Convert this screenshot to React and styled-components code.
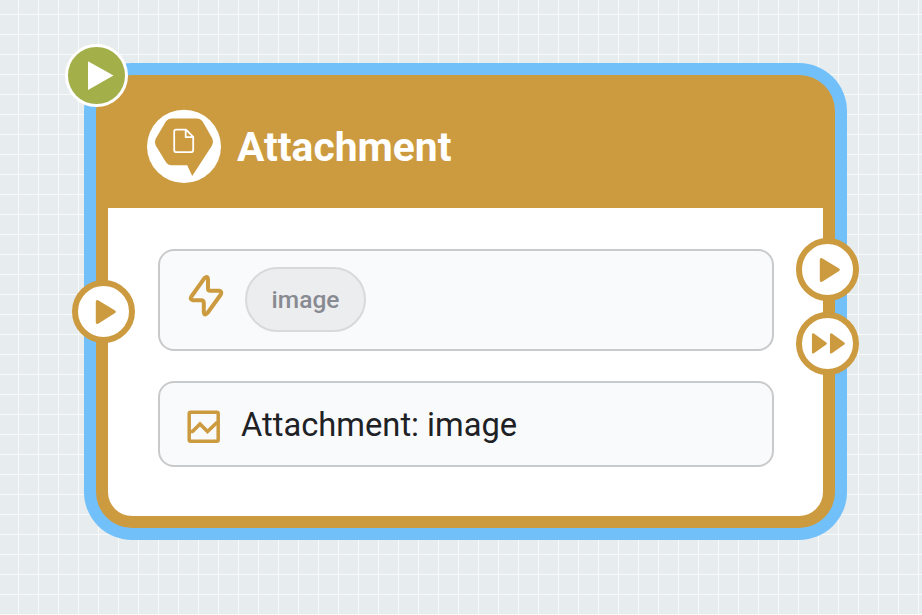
import React from "react";
import styled, { createGlobalStyle } from "styled-components";

const accent = "#cc9a3f";

const GlobalStyle = createGlobalStyle`
  * { box-sizing: border-box; }
  body { margin: 0; font-family: Roboto, sans-serif; overflow: hidden; }
`;

const Canvas = styled.main`
  position: relative;
  width: 922px;
  height: 615px;
  overflow: hidden;
  background-color: #e7ecef;
  background-image: linear-gradient(#f8fafa 1px, transparent 1px),
    linear-gradient(90deg, #f8fafa 1px, transparent 1px);
  background-size: 20px 20px;
  background-position: 18px 14px;
`;

const Node = styled.article`
  position: absolute;
  left: 84px;
  top: 63px;
  width: 763px;
  height: 477px;
  padding: 12px;
  border-radius: 48px;
  background: #72c0fa;
`;

const Card = styled.div`
  display: flex;
  flex-direction: column;
  height: 100%;
  padding: 0 12px 12px;
  border-radius: 36px;
  background: ${accent};
`;

const Header = styled.header`
  display: flex;
  align-items: center;
  gap: 16px;
  height: 133px;
  padding: 10px 0 0 39px;
`;

const Title = styled.h1`
  margin: 0;
  font-size: 40.75px;
  line-height: 48px;
  font-weight: 700;
  color: #fff;
`;

const Body = styled.div`
  flex: 1;
  display: flex;
  flex-direction: column;
  gap: 30px;
  padding: 41px 49px 0 50px;
  border-radius: 0 0 24px 24px;
  background: #fff;
`;

const Row = styled.section`
  display: flex;
  align-items: center;
  height: ${(p) => p.$height}px;
  padding-left: ${(p) => p.$inset}px;
  border: 2px solid #c9cacb;
  border-radius: 16px;
  background: #f9fafc;
`;

const Tag = styled.span`
  display: flex;
  align-items: center;
  justify-content: center;
  width: 121px;
  height: 65px;
  margin: 0 0 2px 17px;
  padding-top: 1px;
  border: 2px solid #d8d9db;
  border-radius: 33px;
  background: #ecedef;
  color: #888a91;
  font-size: 24.5px;
  font-weight: 500;
`;

const RowText = styled.span`
  margin: 2px 0 0 19px;
  font-size: 32.7px;
  line-height: 40px;
  color: #202124;
`;

const Glyph = styled.svg`
  display: block;
  flex: none;
  overflow: visible;
  transform: translateY(${(p) => p.$shift || 0}px);
`;

const Port = styled.button`
  position: absolute;
  left: ${(p) => p.$x}px;
  top: ${(p) => p.$y}px;
  width: 63px;
  height: 63px;
  padding: 0;
  border: 6px solid ${accent};
  border-radius: 50%;
  background: #fff;
`;

const StartBadge = styled.div`
  position: absolute;
  left: 65px;
  top: 44px;
  width: 63px;
  height: 63px;
  border: 3px solid #fff;
  border-radius: 50%;
  background: #a3af49;
`;

function AttachmentLogo() {
  return (
    <Glyph width="74" height="74" viewBox="0 0 74 74">
      <ellipse cx="37" cy="36.4" rx="37" ry="36.6" fill="#fff" />
      <path
        d="M24.5 8.5H50Q53.5 8.5 55.5 11.3L65.3 28.5Q67 32 65 35.5L45.2 66L40.2 55.2H24.5Q21 55.2 19 52.2L8.7 35.5Q7 32 8.7 28.8L19 11.3Q21 8.5 24.5 8.5Z"
        fill={accent}
      />
      <path
        d="M29 19.6H39L46.2 26.8V40Q46.2 42.2 44 42.2H29.2Q27.2 42.2 27.2 40V21.5Q27.2 19.6 29 19.6ZM38.7 19.9V27.2H46"
        fill="none" stroke="#fff" strokeWidth="1.8" strokeLinejoin="round"
      />
    </Glyph>
  );
}

function BoltIcon() {
  return (
    <Glyph width="40" height="44" viewBox="0 0 40 44" $shift={-3.5}>
      <path
        d="M16.3 3.8Q20 .5 20 5.5V14Q20 16.3 22.5 16.3H31Q34.5 17 32.8 20L19.5 38.5Q16.2 42 15.8 37V28.5Q15.8 25.8 13.2 25.8H5Q1.5 25.2 3.4 22Z"
        fill="none" stroke={accent} strokeWidth="4" strokeLinejoin="round"
      />
    </Glyph>
  );
}

function ImageIcon() {
  return (
    <Glyph width="36" height="36" viewBox="0 0 36 36" $shift={3}>
      <rect x="3.2" y="3.2" width="29" height="29" rx="1.5" fill="none" stroke={accent} strokeWidth="3.5" />
      <path d="M4 22.5L6.5 22.5L14 15L21.5 22.5L31.5 13" fill="none" stroke={accent} strokeWidth="3.6" />
    </Glyph>
  );
}

function PlayIcon() {
  return (
    <Glyph width="51" height="51" viewBox="0 0 51 51">
      <path d="M19.3 15.5L36.3 25.8L19.3 36.5Z" fill={accent} stroke={accent} strokeWidth="3" strokeLinejoin="round" />
    </Glyph>
  );
}

function ForwardIcon() {
  return (
    <Glyph width="51" height="51" viewBox="0 0 51 51">
      <path
        d="M11.2 16.6L23.6 25.4L11.2 34.2ZM29.2 16.6L41.6 25.4L29.2 34.2Z"
        fill={accent} stroke={accent} strokeWidth="2.5" strokeLinejoin="round"
      />
    </Glyph>
  );
}

export default function App() {
  return (
    <>
      <GlobalStyle />
      <Canvas>
        <Node>
          <Card>
            <Header>
              <AttachmentLogo />
              <Title>Attachment</Title>
            </Header>
            <Body>
              <Row $height={102} $inset={28}>
                <BoltIcon />
                <Tag>image</Tag>
              </Row>
              <Row $height={86} $inset={26}>
                <ImageIcon />
                <RowText>Attachment: image</RowText>
              </Row>
            </Body>
          </Card>
        </Node>
        <StartBadge>
          <Glyph width="57" height="57" viewBox="0 0 57 57">
            <path d="M20 14.2L45.5 28.5L20 43Z" fill="#fff" />
          </Glyph>
        </StartBadge>
        <Port $x={72} $y={280} aria-label="Input"><PlayIcon /></Port>
        <Port $x={796} $y={238} aria-label="Next"><PlayIcon /></Port>
        <Port $x={796} $y={312} aria-label="Skip ahead"><ForwardIcon /></Port>
      </Canvas>
    </>
  );
}
